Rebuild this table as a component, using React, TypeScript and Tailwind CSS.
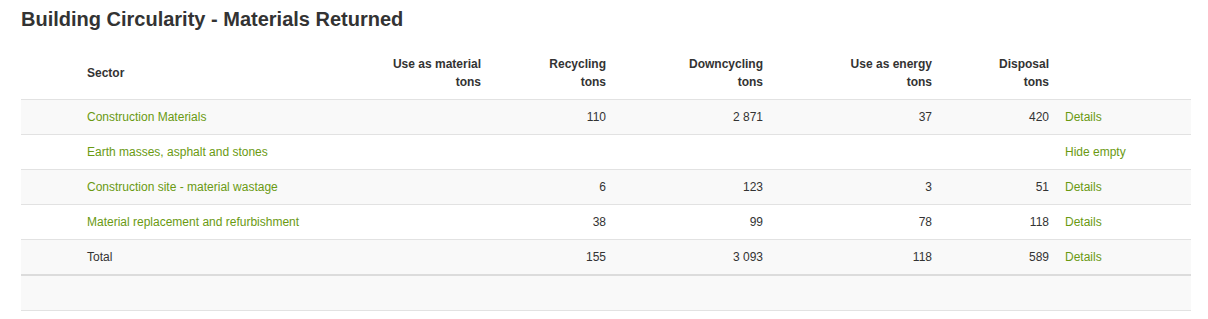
import React from 'react';

type Row = {
  sector: string;
  material?: string;
  recycling?: string;
  downcycling?: string;
  energy?: string;
  disposal?: string;
  action: string;
};

const rows: Row[] = [
  { sector: 'Construction Materials', recycling: '110', downcycling: '2 871', energy: '37', disposal: '420', action: 'Details' },
  { sector: 'Earth masses, asphalt and stones', action: 'Hide empty' },
  { sector: 'Construction site - material wastage', recycling: '6', downcycling: '123', energy: '3', disposal: '51', action: 'Details' },
  { sector: 'Material replacement and refurbishment', recycling: '38', downcycling: '99', energy: '78', disposal: '118', action: 'Details' },
];

const num = 'px-2 py-2 text-right align-top';

export default function App() {
  return (
    <div
      className="bg-white px-[21px] pt-[8px] text-[12px] leading-[18px] text-[#333]"
      style={{ fontFamily: '"Liberation Sans", Arial, sans-serif' }}
    >
      <h1 className="mb-[16px] text-[20px] font-bold leading-[22px] text-[#333]">
        Building Circularity - Materials Returned
      </h1>
      <table className="w-[1170px] table-fixed border-collapse">
        <colgroup>
          <col className="w-[58px]" />
          <col className="w-[300px]" />
          <col className="w-[110px]" />
          <col className="w-[125px]" />
          <col className="w-[157px]" />
          <col className="w-[169px]" />
          <col className="w-[117px]" />
          <col className="w-[134px]" />
        </colgroup>
        <thead>
          <tr className="border-b border-[#e2e2e2] font-bold">
            <th className="px-2 pt-[9px] pb-2" />
            <th className="px-2 pt-[9px] pb-2 text-left align-middle font-bold">Sector</th>
            <th className="px-2 pt-[9px] pb-2 text-right font-bold">Use as material<br />tons</th>
            <th className="px-2 pt-[9px] pb-2 text-right font-bold">Recycling<br />tons</th>
            <th className="px-2 pt-[9px] pb-2 text-right font-bold">Downcycling<br />tons</th>
            <th className="px-2 pt-[9px] pb-2 text-right font-bold">Use as energy<br />tons</th>
            <th className="px-2 pt-[9px] pb-2 text-right font-bold">Disposal<br />tons</th>
            <th className="px-2 pt-[9px] pb-2" />
          </tr>
        </thead>
        <tbody>
          {rows.map((r, i) => (
            <tr key={r.sector} className={`border-b border-[#e2e2e2] ${i % 2 === 0 ? 'bg-[#f9f9f9]' : 'bg-white'}`}>
              <td className="px-2 py-2" />
              <td className="px-2 py-2 text-[#6a9a12]">{r.sector}</td>
              <td className={num}>{r.material}</td>
              <td className={num}>{r.recycling}</td>
              <td className={num}>{r.downcycling}</td>
              <td className={num}>{r.energy}</td>
              <td className={num}>{r.disposal}</td>
              <td className="px-2 py-2 text-[#6a9a12]">{r.action}</td>
            </tr>
          ))}
          <tr className="border-b-2 border-[#dcdcdc] bg-[#f9f9f9]">
            <td className="px-2 py-2" />
            <td className="px-2 py-2">Total</td>
            <td className={num} />
            <td className={num}>155</td>
            <td className={num}>3 093</td>
            <td className={num}>118</td>
            <td className={num}>589</td>
            <td className="px-2 py-2 text-[#6a9a12]">Details</td>
          </tr>
        </tbody>
        <tfoot>
          <tr className="border-b border-[#e2e2e2] bg-[#f9f9f9]">
            <td colSpan={8} className="h-[35px]" />
          </tr>
        </tfoot>
      </table>
    </div>
  );
}
